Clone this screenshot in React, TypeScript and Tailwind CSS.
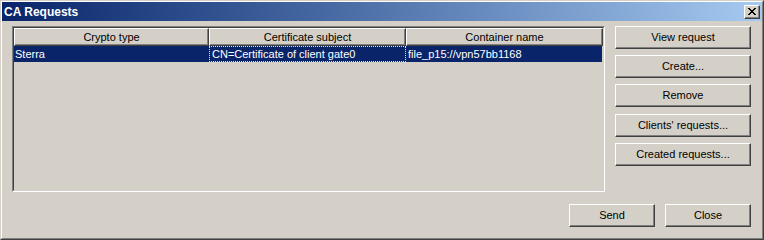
import React from "react";

const font = { fontFamily: '"Liberation Sans", Arial, sans-serif' };

function Btn({ label, className = "" }: { label: string; className?: string }) {
  return (
    <div
      className={
        "flex items-center justify-center h-[23px] bg-[#d4d0c8] text-[11px] text-black border border-t-white border-l-white border-r-[#404040] border-b-[#404040] shadow-[inset_-1px_-1px_0_#808080] " +
        className
      }
    >
      {label}
    </div>
  );
}

function HeaderCell({ label, w }: { label: string; w: string }) {
  return (
    <div
      className={
        "flex items-center justify-center h-[18px] bg-[#d4d0c8] text-[11px] text-black border border-t-white border-l-white border-r-[#404040] border-b-[#404040] shadow-[inset_-1px_-1px_0_#808080] " +
        w
      }
    >
      {label}
    </div>
  );
}

export default function App() {
  return (
    <div style={font} className="w-[764px] h-[240px] bg-[#d4d0c8] border border-t-[#d4d0c8] border-l-[#d4d0c8] border-r-[#404040] border-b-[#404040]">
      <div className="w-full h-full flex flex-col border border-t-white border-l-white border-r-[#808080] border-b-[#808080]">
        {/* Title bar */}
        <div className="h-[19px] flex items-center justify-between bg-gradient-to-r from-[#0a246a] to-[#a6caf0] pl-[2px] pr-[2px]">
          <span className="text-white font-bold text-[12px] leading-none">CA Requests</span>
          <div className="w-[16px] h-[14px] bg-[#d4d0c8] border border-t-white border-l-white border-r-[#404040] border-b-[#404040] shadow-[inset_-1px_-1px_0_#808080] flex items-center justify-center">
            <svg width="8" height="7" viewBox="0 0 8 7">
              <path d="M0 0h2v1h1v1h2V1h1V0h2v1H7v1H6v1H5v1h1v1h1v1h1v1H6V6H5V5H3v1H2v1H0V6h1V5h1V4h1V3H2V2H1V1H0z" fill="#000" />
            </svg>
          </div>
        </div>

        {/* Body */}
        <div className="flex flex-row pl-[10px] pt-[5px]">
          {/* List panel */}
          <div className="w-[593px] h-[166px] border border-t-[#808080] border-l-[#808080] border-r-white border-b-white">
            <div className="w-full h-full bg-[#d4d0c8] border border-t-[#404040] border-l-[#404040] border-r-[#d4d0c8] border-b-[#d4d0c8]">
              <div className="flex flex-row">
                <HeaderCell label="Crypto type" w="w-[195px]" />
                <HeaderCell label="Certificate subject" w="w-[197px]" />
                <HeaderCell label="Container name" w="w-[197px]" />
              </div>
              <div className="flex flex-row h-[16px] bg-[#0a246a] text-white text-[11px] w-[588px]">
                <div className="w-[195px] pl-[1px] flex items-center">Sterra</div>
                <div className="w-[197px] pl-[2px] flex items-center border border-dotted border-[#e8e4c8]">
                  CN=Certificate of client gate0
                </div>
                <div className="w-[196px] pl-[2px] flex items-center">file_p15://vpn57bb1168</div>
              </div>
            </div>
          </div>

          {/* Right buttons */}
          <div className="flex flex-col ml-[10px] w-[136px]">
            <Btn label="View request" />
            <Btn label="Create..." className="mt-[6px]" />
            <Btn label="Remove" className="mt-[6px]" />
            <Btn label="Clients' requests..." className="mt-[7px]" />
            <Btn label="Created requests..." className="mt-[6px]" />
          </div>
        </div>

        {/* Bottom buttons */}
        <div className="flex flex-row justify-end pr-[11px] mt-[12px] gap-[10px]">
          <Btn label="Send" className="w-[86px]" />
          <Btn label="Close" className="w-[86px]" />
        </div>
      </div>
    </div>
  );
}
